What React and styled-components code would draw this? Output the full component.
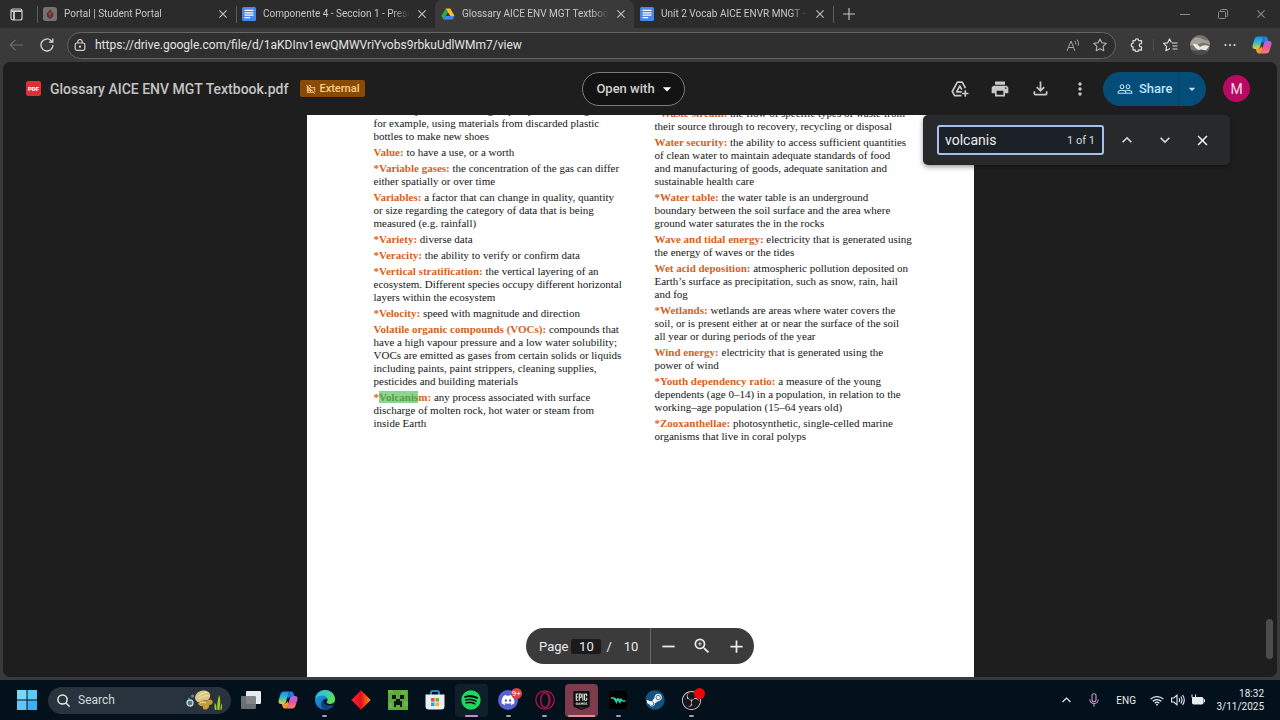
import React from "react";
import styled, { createGlobalStyle, css } from "styled-components";
import {
  MdPrint, MdOutlineFileDownload, MdMoreVert, MdPeopleOutline,
  MdDomainDisabled, MdZoomIn, MdAdd, MdRemove, MdKeyboardArrowUp, MdKeyboardArrowDown,
  MdClose, MdArrowDropDown,
} from "react-icons/md";
import { FaSpotify, FaSteam, FaDiscord } from "react-icons/fa";
import { SiEpicgames, SiObsstudio } from "react-icons/si";

const segoe = `"Segoe UI", Roboto, "Open Sans", sans-serif`;
const google = `"Google Sans", Roboto, "Liberation Sans", sans-serif`;

const GlobalStyle = createGlobalStyle`
  *, *::before, *::after { box-sizing: border-box; }
  body { margin: 0; background: #3a3a3a; font-family: ${segoe}; overflow: hidden; }
  button, input { font: inherit; color: inherit; }
  button { border: 0; padding: 0; background: none; cursor: pointer; }
  svg { display: block; flex: none; }
`;

const Desktop = styled.div`
  display: flex;
  flex-direction: column;
  height: 100vh;
`;

/* ---------- browser chrome ---------- */

const TabStrip = styled.nav`
  display: flex;
  align-items: stretch;
  height: 28px;
  background: #2b2b2b;
  color: #c8c8c8;
`;

const TabMenu = styled.button`
  width: 37px;
  padding-left: 10px;
  display: flex;
  align-items: center;
`;

const Tab = styled.div`
  display: flex;
  align-items: center;
  gap: 7px;
  width: 199px;
  padding: 0 8px 0 6px;
  position: relative;
  border-radius: 7px 7px 0 0;
  background: ${(p) => (p.$active ? "#3a3a3a" : "transparent")};
  ${(p) => p.$divider && css`
    &::before {
      content: "";
      position: absolute;
      left: 0;
      top: 6px;
      height: 17px;
      border-left: 1px solid #5c5c5c;
    }
  `}
`;

const TabTitle = styled.a`
  flex: 1;
  min-width: 0;
  overflow: hidden;
  white-space: nowrap;
  color: inherit;
  text-decoration: none;
  font-size: 10px;
  line-height: 16px;
  mask-image: linear-gradient(90deg, #000 88%, transparent);
`;

const TabClose = styled.button`
  width: 10px;
  height: 10px;
`;

const NewTab = styled.button`
  display: flex;
  align-items: center;
  padding-left: 9px;
  border-left: 1px solid #5c5c5c;
  height: 17px;
  align-self: center;
`;

const WindowButtons = styled.div`
  margin-left: auto;
  display: flex;
  align-items: center;
  gap: 28px;
  padding-right: 14px;
  color: #8a8a8a;
  button { width: 10px; height: 10px; }
`;

const AddressRow = styled.div`
  display: flex;
  align-items: center;
  height: 34px;
  padding: 0 8px 0 9px;
  background: #3a3a3a;
  color: #d8d8d8;
`;

const NavButton = styled.button`
  display: flex;
  justify-content: center;
  width: ${(p) => p.$w || 14}px;
  margin-right: ${(p) => p.$space || 0}px;
  color: ${(p) => (p.$dim ? "#6d6d6d" : "#d8d8d8")};
`;

const AddressPill = styled.form`
  flex: 1;
  display: flex;
  align-items: center;
  gap: 9px;
  height: 27px;
  padding: 0 8px 0 6px;
  border: 1px solid #666;
  border-radius: 14px;
  background: #2f2f2f;
`;

const UrlInput = styled.input`
  flex: 1;
  min-width: 0;
  border: 0;
  padding: 0;
  outline: 0;
  background: none;
  color: #e4e4e4;
  font-size: 12px;
  line-height: 18px;
`;

const BrowserActions = styled.div`
  display: flex;
  align-items: center;
  padding-left: 14px;
`;

const ActionDivider = styled.span`
  width: 1px;
  height: 12px;
  margin-right: 9px;
  background: #505050;
`;

const ProfilePhoto = styled.button`
  width: 20px;
  height: 20px;
  margin-right: 13px;
  border-radius: 50%;
  overflow: hidden;
`;

/* ---------- viewer ---------- */

const Viewer = styled.main`
  flex: 1;
  min-height: 0;
  display: flex;
  flex-direction: column;
  position: relative;
  margin: 0 3px 3px;
  border-radius: 7px;
  overflow: hidden;
  background: #1e1e1e;
  font-family: ${google};
`;

const ViewerHeader = styled.header`
  display: grid;
  grid-template-columns: 1fr auto 1fr;
  align-items: center;
  height: 53px;
  padding: 0 27px 0 14px;
`;

const FileInfo = styled.div`
  display: flex;
  align-items: center;
  padding-left: 9px;
`;

const PdfBadge = styled.span`
  width: 15px;
  height: 15px;
  border-radius: 2px;
  background: #dc2f36;
  color: #fff;
  font-size: 6px;
  font-weight: 900;
  line-height: 15px;
  text-align: center;
`;

const FileName = styled.h1`
  margin: 0 12px 0 9px;
  color: #c4c4c4;
  font-size: 14px;
  font-weight: 500;
  line-height: 20px;
  white-space: nowrap;
`;

const ExternalTag = styled.span`
  display: flex;
  align-items: center;
  gap: 3px;
  height: 17px;
  padding: 0 6px;
  border-radius: 2px;
  background: #884a06;
  color: #ffcf82;
  font-size: 11px;
  font-weight: 500;
`;

const OpenWith = styled.button`
  display: flex;
  align-items: center;
  gap: 2px;
  height: 34px;
  padding: 0 7px 0 13px;
  border: 1px solid #7c7c7c;
  border-radius: 17px;
  background: #131313;
  color: #d0d0d0;
  font-size: 13px;
  font-weight: 500;
`;

const HeaderActions = styled.div`
  display: flex;
  align-items: center;
  justify-content: flex-end;
  color: #c8c8c8;
`;

const IconButton = styled.button`
  display: flex;
  align-items: center;
  justify-content: center;
  width: ${(p) => p.$w || 40}px;
  height: 34px;
`;

const ShareGroup = styled.div`
  display: flex;
  height: 34px;
  margin: 0 17px 0 3px;
  border-radius: 17px;
  overflow: hidden;
  background: #044d78;
  color: #bfe3fb;
`;

const ShareButton = styled.button`
  display: flex;
  align-items: center;
  gap: 6px;
  width: 75px;
  padding-left: 14px;
  font-size: 13px;
  font-weight: 500;
`;

const ShareMore = styled.button`
  display: flex;
  align-items: center;
  width: 28px;
  padding-left: 5px;
  border-left: 1px solid #123c58;
`;

const Account = styled.button`
  width: 27px;
  height: 27px;
  border-radius: 50%;
  background: #b80a62;
  color: #f6dfe9;
  font-size: 14px;
`;

const DocumentArea = styled.section`
  flex: 1;
  min-height: 0;
  display: flex;
  justify-content: center;
  overflow: hidden;
`;

const Sheet = styled.article`
  display: grid;
  grid-template-columns: 281px 1fr;
  align-items: start;
  width: 667px;
  padding-left: 67px;
  overflow: hidden;
  background: #fff;
  color: #161616;
  font: 11px/13px "Liberation Serif", "Times New Roman", serif;
`;

const Column = styled.dl`
  display: flex;
  flex-direction: column;
  gap: 3px;
  margin: 0;
  margin-top: ${(p) => -p.$scrolled}px;
`;

const Entry = styled.div`
  white-space: pre;
  dt, dd { display: inline; margin: 0; }
  dt { color: #d85f1c; font-weight: 700; }
`;

const Match = styled.mark`
  background: #8bd590;
  color: #5d9c3c;
`;

const FindBar = styled.form`
  position: absolute;
  top: 53px;
  right: 47px;
  display: flex;
  align-items: center;
  height: 50px;
  padding: 0 10px 0 14px;
  border-radius: 5px;
  background: #28292a;
  color: #d8d8d8;
  box-shadow: 0 2px 5px rgba(0, 0, 0, 0.4);
`;

const FindField = styled.label`
  display: flex;
  align-items: center;
  width: 167px;
  height: 30px;
  margin-right: 4px;
  padding: 0 7px 0 6px;
  border: 2px solid #a3c0ee;
  border-radius: 3px;
  background: #1c2128;
  font-size: 11px;
`;

const FindInput = styled.input`
  flex: 1;
  min-width: 0;
  padding: 0;
  border: 0;
  outline: 0;
  background: none;
  color: #ececec;
  font-size: 14px;
`;

const PageBar = styled.div`
  position: absolute;
  bottom: 13px;
  left: 0;
  right: 0;
  margin: 0 auto;
  width: 228px;
  display: flex;
  align-items: center;
  height: 36px;
  border-radius: 18px;
  background: #3b3b3b;
  color: #ececec;
  font-size: 13px;
`;

const PageNumber = styled.label`
  display: flex;
  align-items: center;
  width: 125px;
  height: 36px;
  padding-left: 13px;
  border-right: 1px solid #696969;
`;

const PageInput = styled.input`
  width: 30px;
  height: 15px;
  margin: 0 5px 0 3px;
  padding: 0;
  border: 0;
  border-radius: 2px;
  background: #1b1b1b;
  text-align: center;
`;

const PageTotal = styled.span`
  padding-left: 12px;
`;

const ScrollThumb = styled.div`
  position: absolute;
  right: 4px;
  bottom: 18px;
  width: 7px;
  height: 40px;
  border-radius: 4px;
  background: #4c4c4c;
`;

/* ---------- taskbar ---------- */

const Taskbar = styled.footer`
  display: flex;
  align-items: center;
  height: 40px;
  padding: 0 16px 0 17px;
  background: #03111d;
  color: #e8edf0;
`;

const Search = styled.label`
  display: flex;
  align-items: center;
  width: 183px;
  height: 27px;
  margin-left: 11px;
  padding: 0 5px 0 9px;
  border-radius: 14px;
  background: #28333d;
`;

const SearchInput = styled.input`
  flex: 1;
  min-width: 0;
  margin-left: 8px;
  padding: 0;
  border: 0;
  outline: 0;
  background: none;
  font-size: 12px;
  &::placeholder { color: #d2d8dc; opacity: 1; }
`;

const AppList = styled.div`
  display: grid;
  grid-template-columns: repeat(13, 1fr);
  width: 477px;
  margin-left: 2px;
  justify-items: center;
`;

const AppButton = styled.button`
  position: relative;
  display: flex;
  align-items: center;
  justify-content: center;
  width: 33px;
  height: 33px;
  border-radius: 4px;
  background: ${(p) => p.$fill || "transparent"};
  ${(p) => p.$mark && css`
    &::after {
      content: "";
      position: absolute;
      bottom: 0;
      left: 0;
      right: 0;
      margin: 0 auto;
      width: ${p.$markWidth || 5}px;
      height: 2px;
      border-radius: 1px;
      background: ${p.$mark};
    }
  `}
`;

const Disc = styled.span`
  display: flex;
  align-items: center;
  justify-content: center;
  width: 20px;
  height: 20px;
  border-radius: ${(p) => p.$radius || "50%"};
  background: ${(p) => p.$bg};
`;

const Notice = styled.span`
  position: absolute;
  top: 4px;
  left: 19px;
  width: 11px;
  height: 11px;
  border-radius: 50%;
  background: ${(p) => p.$bg};
  color: #fff;
  font-size: 8px;
  line-height: 11px;
  text-align: center;
`;

const Tray = styled.div`
  display: flex;
  align-items: center;
  margin-left: auto;
  font-size: 10px;
  line-height: 13px;
`;

const TrayButton = styled.button`
  display: flex;
  justify-content: center;
  margin-right: ${(p) => p.$space || 0}px;
`;

const Clock = styled.time`
  width: 56px;
  text-align: right;
  white-space: nowrap;
`;

/* ---------- drawings ---------- */

const Cross = ({ size = 10, color = "#c4c4c4" }) => (
  <svg width={size} height={size} viewBox="0 0 10 10" stroke={color} strokeWidth="1.1">
    <path d="M1.4 1.4l7.2 7.2M8.6 1.4L1.4 8.6" />
  </svg>
);

const DocsIcon = () => (
  <svg width="14" height="14" viewBox="0 0 14 14">
    <rect width="14" height="14" rx="1.5" fill="#4a86ea" />
    <path d="M2.6 3.4h8.8M2.6 5.8h8.8M2.6 8.2h8.8M2.6 10.6h5.6" stroke="#fff" strokeWidth="1.3" />
  </svg>
);

const PortalIcon = () => (
  <svg width="14" height="14" viewBox="0 0 14 14">
    <rect width="14" height="14" rx="2.5" fill="#77716f" />
    <path d="M7 2l1 2 2.4 2.4L9.6 10 7 12l-2.6-2L3.6 6.4 6 4z" fill="#5c2f35" />
    <path d="M7 5v5M5.5 7h3" stroke="#a5544f" />
  </svg>
);

const DriveIcon = () => (
  <svg width="14" height="14" viewBox="0 0 14 14">
    <path d="M4.8 1.5L.4 9l2.1 3.6L7 5.2z" fill="#2da94f" />
    <path d="M4.8 1.5h4.4L13.6 9H9.3z" fill="#fcc31e" />
    <path d="M2.5 12.6L4.7 9h8.9l-2.1 3.6z" fill="#4285f4" />
  </svg>
);

const AddToDriveIcon = () => (
  <svg width="18" height="18" viewBox="0 0 18 18" fill="none" stroke="currentColor" strokeWidth="1.7" strokeLinejoin="round">
    <path d="M10.500 15.600H3.600L1.300 11.500 6.400 2.200h4.800l3.300 6" />
    <path d="M10.800 11.800H5.600L8.800 6l2 3.600" />
    <path d="M14.300 10.300v6.400M11.100 13.500h6.400" />
  </svg>
);

const CopilotIcon = ({ size = 20, id }) => (
  <svg width={size} height={size} viewBox="0 0 20 20">
    <defs>
      <linearGradient id={`${id}a`} x1="0" y1="0" x2="0" y2="1">
        <stop offset="0" stopColor="#1a8cf0" /><stop offset=".5" stopColor="#31bfc4" /><stop offset="1" stopColor="#f2c72e" />
      </linearGradient>
      <linearGradient id={`${id}b`} x1="0" y1="0" x2="0" y2="1">
        <stop offset="0" stopColor="#a06be8" /><stop offset=".5" stopColor="#e755a6" /><stop offset="1" stopColor="#ff8057" />
      </linearGradient>
      <linearGradient id={`${id}c`} x1="0" y1="0" x2="1" y2="0">
        <stop offset="0" stopColor="#1668d8" /><stop offset="1" stopColor="#2f8cf2" />
      </linearGradient>
    </defs>
    <path d="M11.500 1.500h1.800c1.300 0 1.900 1 2.300 2.500l.8 2.500h-3c-1.500 0-2.400.8-2.900 2.300L9 6z" fill={`url(#${id}c)`} />
    <path d="M8.500 18.500h-1.800c-1.300 0-1.900-1-2.300-2.500L3.600 13.500h3c1.500 0 2.400-.8 2.900-2.300L11 14z" fill="#f5953c" />
    <path d="M11.500 1.500H6C4 1.500 3 2.500 2.400 4.500L.7 10c-.7 2.500.2 4 2.300 4h2.600c1.400 0 2-.7 2.400-2l2.300-8c.3-1.200.6-2 1.200-2.500z" fill={`url(#${id}a)`} />
    <path d="M8.500 18.500H14c2 0 3-1 3.600-3l1.700-5.500c.7-2.500-.2-4-2.300-4h-2.600c-1.400 0-2 .7-2.400 2l-2.300 8c-.3 1.200-.6 2-1.200 2.500z" fill={`url(#${id}b)`} />
  </svg>
);

const WindowsLogo = () => (
  <svg width="20" height="20" viewBox="0 0 20 20" fill="#5cc8f5">
    <path d="M0 0h9.500v9.500H0z" fill="#7ad6f8" /><path d="M10.500 0H20v9.500h-9.500zM0 10.500h9.500V20H0z" />
    <path d="M10.500 10.500H20V20h-9.500z" fill="#38b3ef" />
  </svg>
);

const ShellArt = () => (
  <svg width="40" height="22" viewBox="0 0 40 22">
    <circle cx="4" cy="14" r="3" fill="#50738c" stroke="#c8dae6" strokeWidth="1.300" />
    <circle cx="6.500" cy="7" r="1.500" fill="#718b9a" />
    <circle cx="3" cy="9.500" r="1" fill="#718b9a" />
    <path d="M9 9c0-5 5-8 9.500-7.500 4 .4 6.500 3 5.500 6.500-.8 3-3.500 3.500-6 3.500s-5 3-7 1c-1-1-2-2-2-3.500z" fill="#d9c681" />
    <path d="M12 14c3-3 6-3 8-2 2-2 6-2 6.500 0 1 3-2 4-3.500 4 .5 3-2 5-4.500 4.500-2-.3-2-2-1.500-3.500-2 .8-5-.7-5-3z" fill="#c49c3d" />
    <path d="M12 8c2-3 5-4.500 9-4.500M13 10c3-3 6-3.500 10-3M14 14c2-1 4-1 6 0" stroke="#f4e8b8" fill="none" />
    <path d="M29 21c-1-3 0-5-.5-7 2 1 2 4 2 7zM31.500 21c-1-5 .5-10 1.500-15 2 4 1 10 .5 15zM34.500 21c0-3 .5-5 1-7 1 3 .5 5 0 7z" fill="#a5ca22" />
  </svg>
);

const TaskViewIcon = () => (
  <svg width="22" height="20" viewBox="0 0 22 20">
    <rect x="6" y="1" width="15" height="13" rx="1" fill="#e9ebec" />
    <rect x="1" y="6" width="15" height="13" rx="1" fill="#777b7e" opacity=".9" />
  </svg>
);

const EdgeIcon = () => (
  <svg width="20" height="20" viewBox="0 0 20 20">
    <defs>
      <linearGradient id="edge1" x1="0" y1="0" x2="1" y2=".4">
        <stop offset="0" stopColor="#31b6e8" /><stop offset=".6" stopColor="#36cfb0" /><stop offset="1" stopColor="#66dd4a" />
      </linearGradient>
      <linearGradient id="edge2" x1="0" y1="0" x2="1" y2="1">
        <stop offset="0" stopColor="#1ca0e4" /><stop offset="1" stopColor="#0f5bb5" />
      </linearGradient>
    </defs>
    <circle cx="10" cy="10" r="10" fill="url(#edge2)" />
    <path d="M.1 9C1 3.500 5 0 10 0c6 0 10 4.500 10 9 0 3.400-2.500 5-5.200 5-2.300 0-3.500-.8-3.200-1.500.5-.7 1-1.200 1-2.500C12.600 7.500 10 5.500 7 5.500 3.500 5.500 1 7 .1 9z" fill="url(#edge1)" />
    <path d="M8 10c0 4 3.500 7 7.500 6.500 1.500-.2 2.500-.6 3.200-1C17 18.500 13.500 20.300 10 20c-4-1.500-5.500-7-2-10z" fill="#12427f" />
    <path d="M12.500 9c.2 2-1.800 2.700-.5 4 1.800 1.400 6 1.300 7.500-.7L18.700 15c-5 2.500-10 .2-10.500-3.500C8 9.500 10 8 12.500 9z" fill="#071828" />
  </svg>
);

const DiamondIcon = () => (
  <svg width="20" height="20" viewBox="0 0 20 20">
    <defs>
      <linearGradient id="dia"><stop offset="0" stopColor="#f5203c" /><stop offset=".5" stopColor="#e8101c" /><stop offset="1" stopColor="#ff9a18" /></linearGradient>
    </defs>
    <path d="M10 .3l9.700 9.700L10 19.700.3 10z" fill="url(#dia)" />
  </svg>
);

const CreeperIcon = () => (
  <svg width="20" height="20" viewBox="0 0 20 20">
    <path d="M0 0h20v20H0z" fill="#5cab3c" />
    <path d="M0 0h5v3H0zM13 1h5v3h-5zM1 13h3v5H1zM16 11h4v5h-4z" fill="#78c054" opacity=".6" />
    <path d="M4 5h4v4H4zM12 5h4v4h-4zM8 9h4v2h2v6h-2v-2H8v2H6v-6h2z" fill="#0d160c" />
  </svg>
);

const StoreIcon = () => (
  <svg width="20" height="20" viewBox="0 0 20 20">
    <path d="M6 5V2.500C6 1.500 6.500 1 7.500 1h5c1 0 1.500.5 1.500 1.500V5" fill="none" stroke="#3fa8e8" strokeWidth="1.600" />
    <path d="M.5 4.500h19V16c0 2.500-1 3.500-3.500 3.500H4C1.500 19.500.5 18.500.5 16z" fill="#eceff1" />
    <path d="M6 8h3.600v3.600H6z" fill="#e45230" /><path d="M10.500 8h3.600v3.600h-3.600z" fill="#75b52c" />
    <path d="M6 12.500h3.600v3.600H6z" fill="#2b9fe0" /><path d="M10.500 12.500h3.600v3.600h-3.600z" fill="#f5b51b" />
  </svg>
);

const OperaIcon = () => (
  <svg width="20" height="20" viewBox="0 0 20 20" fill="none" stroke="#b31248">
    <circle cx="10" cy="10" r="9.200" strokeWidth="1.300" />
    <ellipse cx="10" cy="10" rx="4.200" ry="7.600" strokeWidth="1.500" />
    <path d="M10 2.400c7 0 7 15.200 0 15.200" />
  </svg>
);

const WaveAppIcon = () => (
  <svg width="18" height="18" viewBox="0 0 18 18">
    <rect width="18" height="18" rx="1" fill="#000" />
    <path d="M2 7h2.500l3 4.500L8.500 8l2.500 3.500L12 8l1.500 2H16.500M5.500 7l3 3M9 7.500l3 3" fill="none" stroke="#2bd3a6" strokeWidth="1.300" />
  </svg>
);

const tabs = [
  { title: "Portal | Student Portal", icon: <PortalIcon />, divider: true },
  { title: "Componente 4 - Seccion 1 - Presentacion", icon: <DocsIcon />, divider: true },
  { title: "Glossary AICE ENV MGT Textbook.pdf", icon: <DriveIcon />, active: true },
  { title: "Unit 2 Vocab AICE ENVR MNGT - ", icon: <DocsIcon /> },
];

const leftEntries = [
  ["", "with components remaking or partly into better goods\nfor example, using materials from discarded plastic\nbottles to make new shoes"],
  ["Value:", " to have a use, or a worth"],
  ["*Variable gases:", " the concentration of the gas can differ\neither spatially or over time"],
  ["Variables:", " a factor that can change in quality, quantity\nor size regarding the category of data that is being\nmeasured (e.g. rainfall)"],
  ["*Variety:", " diverse data"],
  ["*Veracity:", " the ability to verify or confirm data"],
  ["*Vertical stratification:", " the vertical layering of an\necosystem. Different species occupy different horizontal\nlayers within the ecosystem"],
  ["*Velocity:", " speed with magnitude and direction"],
  ["Volatile organic compounds (VOCs):", " compounds that\nhave a high vapour pressure and a low water solubility;\nVOCs are emitted as gases from certain solids or liquids\nincluding paints, paint strippers, cleaning supplies,\npesticides and building materials"],
  [<>*<Match>Volcanis</Match>m:</>, " any process associated with surface\ndischarge of molten rock, hot water or steam from\ninside Earth"],
];

const rightEntries = [
  ["*Waste stream:", " the flow of specific types of waste from\ntheir source through to recovery, recycling or disposal"],
  ["Water security:", " the ability to access sufficient quantities\nof clean water to maintain adequate standards of food\nand manufacturing of goods, adequate sanitation and\nsustainable health care"],
  ["*Water table:", " the water table is an underground\nboundary between the soil surface and the area where\nground water saturates the in the rocks"],
  ["Wave and tidal energy:", " electricity that is generated using\nthe energy of waves or the tides"],
  ["Wet acid deposition:", " atmospheric pollution deposited on\nEarth’s surface as precipitation, such as snow, rain, hail\nand fog"],
  ["*Wetlands:", " wetlands are areas where water covers the\nsoil, or is present either at or near the surface of the soil\nall year or during periods of the year"],
  ["Wind energy:", " electricity that is generated using the\npower of wind"],
  ["*Youth dependency ratio:", " a measure of the young\ndependents (age 0–14) in a population, in relation to the\nworking–age population (15–64 years old)"],
  ["*Zooxanthellae:", " photosynthetic, single-celled marine\norganisms that live in coral polyps"],
];

const Glossary = ({ entries, scrolled }) => (
  <Column $scrolled={scrolled}>
    {entries.map(([term, text], i) => (
      <Entry key={i}>{term && <dt>{term}</dt>}<dd>{text}</dd></Entry>
    ))}
  </Column>
);

const gray = "#9aa3a9";
const apps = [
  { name: "Task view", icon: <TaskViewIcon /> },
  { name: "Copilot", icon: <CopilotIcon size={20} id="task" /> },
  { name: "Edge", icon: <EdgeIcon />, mark: gray },
  { name: "Diamond", icon: <DiamondIcon /> },
  { name: "Minecraft", icon: <CreeperIcon /> },
  { name: "Store", icon: <StoreIcon /> },
  { name: "Spotify", icon: <Disc $bg="#000"><FaSpotify size={20} color="#1ed760" /></Disc>, mark: "#c78bd0", markWidth: 13, fill: "#10202b" },
  { name: "Discord", icon: <Disc $bg="#5562d8"><FaDiscord size={14} color="#fff" /></Disc>, mark: gray, notice: "9+", noticeBg: "#d8443f" },
  { name: "Opera GX", icon: <OperaIcon />, mark: gray },
  { name: "Epic Games", icon: <Disc $bg="linear-gradient(#e8e8e8, #e8e8e8) center / 14px 14px no-repeat" $radius="0"><SiEpicgames size={19} color="#111" /></Disc>, mark: "#f08b98", markWidth: 27, fill: "#7c3c4b" },
  { name: "Wave", icon: <WaveAppIcon />, mark: gray },
  { name: "Steam", icon: <Disc $bg="radial-gradient(#eef2f5 8px, transparent 9px)"><FaSteam size={20} color="#14527f" /></Disc> },
  { name: "OBS", icon: <Disc $bg="#15171a"><SiObsstudio size={19} color="#c9c9c9" /></Disc>, mark: gray, notice: " ", noticeBg: "#e80808" },
];

export default function App() {
  return (
    <Desktop>
      <GlobalStyle />
      <TabStrip>
        <TabMenu aria-label="Tab actions">
          <svg width="13" height="13" viewBox="0 0 13 13" fill="none" stroke="#d0d0d0" strokeWidth="1.200">
            <rect x="1" y="1" width="11" height="11" rx="2" /><path d="M1 3.200h11M4 3v9" strokeWidth="1.800" />
          </svg>
        </TabMenu>
        {tabs.map((t) => (
          <Tab key={t.title} $active={t.active} $divider={t.divider}>
            {t.icon}
            <TabTitle href="#">{t.title}</TabTitle>
            <TabClose aria-label="Close tab"><Cross /></TabClose>
          </Tab>
        ))}
        <NewTab aria-label="New tab">
          <svg width="12" height="12" viewBox="0 0 12 12" stroke="#c8c8c8" strokeWidth="1.100"><path d="M6 0v12M0 6h12" /></svg>
        </NewTab>
        <WindowButtons>
          <button aria-label="Minimize"><svg width="10" height="10" stroke="currentColor"><path d="M0 5.500h10" /></svg></button>
          <button aria-label="Restore">
            <svg width="10" height="10" fill="none" stroke="currentColor"><rect x=".5" y="2.500" width="7" height="7" rx="1" /><path d="M2.500 2.500v-1q0-1 1-1h5q1 0 1 1v5q0 1-1 1h-1" /></svg>
          </button>
          <button aria-label="Close"><Cross color="#8a8a8a" /></button>
        </WindowButtons>
      </TabStrip>

      <AddressRow>
        <NavButton $dim $space={17} aria-label="Back">
          <svg width="14" height="12" viewBox="0 0 14 12" fill="none" stroke="currentColor" strokeWidth="1.100"><path d="M14 6H1M6.500.8L1.200 6l5.300 5.200" /></svg>
        </NavButton>
        <NavButton $space={13} aria-label="Reload">
          <svg width="14" height="14" viewBox="0 0 14 14" fill="none" stroke="currentColor" strokeWidth="1.300"><path d="M13 7a6 6 0 1 1-2-4.500L12.600 4M12.800.5V4.200H9" /></svg>
        </NavButton>
        <AddressPill onSubmit={(e) => e.preventDefault()}>
          <svg width="12" height="12" viewBox="0 0 12 12" fill="none" stroke="#d0d0d0" strokeWidth="1.200"><rect x="1.200" y="4" width="9.600" height="7.300" rx="1.500" /><path d="M3.800 4V2.700a2.200 2.200 0 0 1 4.400 0V4" /><circle cx="6" cy="7.600" r=".6" fill="#d0d0d0" /></svg>
          <UrlInput aria-label="Address" defaultValue="https://drive.google.com/file/d/1aKDInv1ewQMWVriYvobs9rbkuUdlWMm7/view" />
          <NavButton type="button" $space={4} aria-label="Read aloud">
            <svg width="14" height="13" viewBox="0 0 14 13" fill="none" stroke="#a5a5a5" strokeWidth="1"><path d="M1 12L5 2l4 10M2.400 8.500h5.200M8.600 1.800q1.600 1.500 1 3.700M11 .6q2.400 2.600 1.200 6" /></svg>
          </NavButton>
          <NavButton type="button" aria-label="Favorite">
            <svg width="14" height="14" viewBox="0 0 14 14" fill="none" stroke="#b5b5b5" strokeWidth="1.100" strokeLinejoin="round"><path d="M7 .9l1.900 3.900 4.300.6-3.100 3 .7 4.300L7 10.700l-3.800 2 .7-4.300-3.100-3 4.300-.6z" /></svg>
          </NavButton>
        </AddressPill>
        <BrowserActions>
          <NavButton $space={9} aria-label="Extensions">
            <svg width="14" height="14" viewBox="0 0 14 14" fill="none" stroke="currentColor" strokeWidth="1.300" strokeLinejoin="round"><path d="M3 2.600h2.200a1.700 1.700 0 0 1 3.400 0H11.500v3h-.6a1.600 1.600 0 0 0 0 3.200h.6v3.200H8.600a1.700 1.700 0 0 1-3.400 0H3V9a1.800 1.800 0 0 1 0-3.600z" /></svg>
          </NavButton>
          <ActionDivider />
          <NavButton $space={13} aria-label="Favorites">
            <svg width="15" height="14" viewBox="0 0 15 14" fill="none" stroke="currentColor" strokeWidth="1.200" strokeLinejoin="round"><path d="M9 5h5.500M9.500 8h5M9.500 11h5M8.400 4.600L6.500.9 4.700 4.800l-4.200.6 3.100 3-.7 4.300 4-2.200" /></svg>
          </NavButton>
          <ProfilePhoto aria-label="Profile">
            <svg width="20" height="20" viewBox="0 0 20 20"><rect width="20" height="20" fill="#77736f" /><path d="M0 8q5-8 10-5t10 3v4Q14 6 9 9t-9 1z" fill="#a39f99" /><path d="M3 9q4-1 7 3 3-3 9-1-2 5-6 4-2-1-4 0Q5 14 3 9z" fill="#ece8e2" /><path d="M2 15q5 1 8 0t8 2v3H2z" fill="#4c4a48" /></svg>
          </ProfilePhoto>
          <NavButton $space={15} aria-label="Settings and more">
            <svg width="12" height="4" viewBox="0 0 12 4" fill="currentColor"><circle cx="1.500" cy="2" r="1.100" /><circle cx="6" cy="2" r="1.100" /><circle cx="10.500" cy="2" r="1.100" /></svg>
          </NavButton>
          <NavButton $w={20} aria-label="Copilot"><CopilotIcon size={20} id="bar" /></NavButton>
        </BrowserActions>
      </AddressRow>

      <Viewer>
        <ViewerHeader>
          <FileInfo>
            <PdfBadge>PDF</PdfBadge>
            <FileName>Glossary AICE ENV MGT Textbook.pdf</FileName>
            <ExternalTag><MdDomainDisabled size={10} />External</ExternalTag>
          </FileInfo>
          <OpenWith>Open with<MdArrowDropDown size={20} color="#fff" /></OpenWith>
          <HeaderActions>
            <IconButton aria-label="Add shortcut to Drive"><AddToDriveIcon /></IconButton>
            <IconButton aria-label="Print"><MdPrint size={20} /></IconButton>
            <IconButton aria-label="Download"><MdOutlineFileDownload size={21} /></IconButton>
            <IconButton aria-label="More actions"><MdMoreVert size={20} /></IconButton>
            <ShareGroup>
              <ShareButton><MdPeopleOutline size={16} />Share</ShareButton>
              <ShareMore aria-label="Sharing options"><MdArrowDropDown size={16} /></ShareMore>
            </ShareGroup>
            <Account aria-label="Account">M</Account>
          </HeaderActions>
        </ViewerHeader>

        <DocumentArea>
          <Sheet>
            <Glossary entries={leftEntries} scrolled={11} />
            <Glossary entries={rightEntries} scrolled={8} />
          </Sheet>
        </DocumentArea>

        <FindBar onSubmit={(e) => e.preventDefault()}>
          <FindField>
            <FindInput aria-label="Find in document" defaultValue="volcanis" />
            1 of 1
          </FindField>
          <IconButton type="button" $w={38} aria-label="Previous"><MdKeyboardArrowUp size={20} /></IconButton>
          <IconButton type="button" $w={38} aria-label="Next"><MdKeyboardArrowDown size={20} /></IconButton>
          <IconButton type="button" $w={36} aria-label="Close find"><MdClose size={17} color="#fff" /></IconButton>
        </FindBar>

        <PageBar>
          <PageNumber>Page<PageInput defaultValue="10" />/<PageTotal>10</PageTotal></PageNumber>
          <IconButton $w={34} aria-label="Zoom out"><MdRemove size={21} /></IconButton>
          <IconButton $w={34} aria-label="Fit"><MdZoomIn size={20} /></IconButton>
          <IconButton $w={34} aria-label="Zoom in"><MdAdd size={21} /></IconButton>
        </PageBar>
        <ScrollThumb />
      </Viewer>

      <Taskbar>
        <TrayButton aria-label="Start"><WindowsLogo /></TrayButton>
        <Search>
          <svg width="13" height="13" viewBox="0 0 13 13" fill="none" stroke="#e6eaec" strokeWidth="1.500"><circle cx="5.500" cy="5.500" r="4.600" /><path d="M9 9l3.600 3.600" /></svg>
          <SearchInput aria-label="Search" placeholder="Search" />
          <ShellArt />
        </Search>
        <AppList>
          {apps.map((a) => (
            <AppButton key={a.name} aria-label={a.name} $fill={a.fill} $mark={a.mark} $markWidth={a.markWidth}>
              {a.icon}
              {a.notice && <Notice $bg={a.noticeBg}>{a.notice}</Notice>}
            </AppButton>
          ))}
        </AppList>
        <Tray>
          <TrayButton $space={18} aria-label="Hidden icons"><svg width="9" height="6" viewBox="0 0 9 6" fill="none" stroke="#e8edf0" strokeWidth="1.200"><path d="M.5 5l4-4 4 4" /></svg></TrayButton>
          <TrayButton $space={17} aria-label="Microphone"><svg width="10" height="14" viewBox="0 0 10 14" fill="none" stroke="#c59ac9" strokeWidth="1.100"><rect x="3" y=".7" width="4" height="8" rx="2" /><path d="M.8 6.500a4.200 4.200 0 0 0 8.400 0M5 11v2.800" /></svg></TrayButton>
          <TrayButton $space={14}>ENG</TrayButton>
          <TrayButton $space={7} aria-label="Network"><svg width="14" height="11" viewBox="0 0 14 11" fill="none" stroke="#e8edf0" strokeWidth="1.200"><path d="M.6 4.200a9 9 0 0 1 12.800 0M2.700 6.300a6.100 6.100 0 0 1 8.600 0M4.700 8.200a3.300 3.300 0 0 1 4.600 0" /><circle cx="7" cy="9.700" r=".9" fill="#e8edf0" stroke="none" /></svg></TrayButton>
          <TrayButton $space={6} aria-label="Volume"><svg width="14" height="12" viewBox="0 0 14 12" fill="none" stroke="#e8edf0" strokeWidth="1.100"><path d="M.6 4h2.200L6 1.200v9.600L2.800 8H.6zM8 4q1.300 2 0 4M9.800 2.500q2.400 3.500 0 7M11.600 1q3.400 5 0 10" /></svg></TrayButton>
          <TrayButton $space={3} aria-label="Battery"><svg width="14" height="12" viewBox="0 0 14 12"><rect x="1" y="3" width="11.500" height="7.500" rx="1.800" fill="#e8edf0" /><path d="M12.800 5.300h1.200v3h-1.200z" fill="#e8edf0" /><path d="M1 .5v3h1.200v3.500M4.600.5v3H3.400" stroke="#e8edf0" fill="none" /></svg></TrayButton>
          <Clock>18:32<br />3/11/2025</Clock>
        </Tray>
      </Taskbar>
    </Desktop>
  );
}
